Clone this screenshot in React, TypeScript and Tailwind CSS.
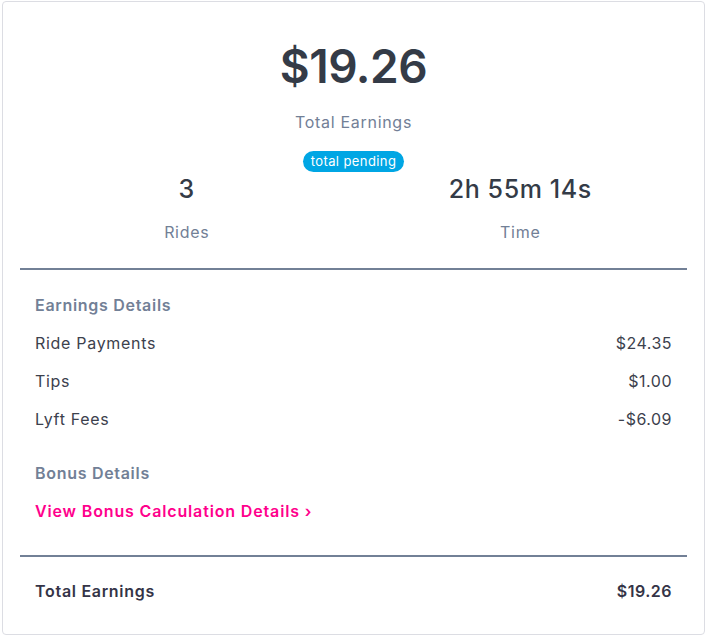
export default function App() {
  const rows = [
    { label: "Ride Payments", value: "$24.35" },
    { label: "Tips", value: "$1.00" },
    { label: "Lyft Fees", value: "-$6.09" },
  ];

  return (
    <div className="w-[710px] h-[636px] bg-white pl-[2px] pt-[1px] font-['Inter',sans-serif]">
      <div className="w-[703px] h-[634px] rounded-[4px] border border-[#dcdde3] px-[17px]">
        {/* Summary */}
        <div className="flex flex-col items-center pt-[26px]">
          <div className="text-[46px] leading-[76px] font-semibold text-[#343b47] tracking-[-0.5px]">$19.26</div>
          <div className="mt-[6px] text-[16px] leading-[24px] tracking-[0.7px] text-[#728096]">Total Earnings</div>
          <div className="mt-[17px] h-[21px] px-[8px] rounded-full bg-[#00a6e4] text-white text-[13px] leading-[21px] tracking-[0.4px]">
            total pending
          </div>
        </div>
        <div className="grid grid-cols-2 pb-[24px]">
          <div className="flex flex-col items-center">
            <div className="text-[25px] leading-[34px] font-medium tracking-[0.6px] text-[#343b47]">3</div>
            <div className="mt-[14px] text-[16px] leading-[24px] tracking-[0.7px] text-[#728096]">Rides</div>
          </div>
          <div className="flex flex-col items-center">
            <div className="text-[25px] leading-[34px] font-medium tracking-[0.6px] text-[#343b47]">2h 55m 14s</div>
            <div className="mt-[14px] text-[16px] leading-[24px] tracking-[0.7px] text-[#728096]">Time</div>
          </div>
        </div>

        <div className="h-[2px] bg-[#728096]" />

        {/* Details */}
        <div className="px-[15px] pt-[23px] pb-[32px] tracking-[0.7px]">
          <div className="text-[16px] leading-[24px] font-semibold text-[#728096]">Earnings Details</div>
          {rows.map((r) => (
            <div key={r.label} className="mt-[14px] flex justify-between text-[16px] leading-[24px] text-[#3c414d]">
              <span>{r.label}</span>
              <span className="tracking-[0.5px]">{r.value}</span>
            </div>
          ))}
          <div className="mt-[30px] text-[16px] leading-[24px] font-semibold text-[#728096]">Bonus Details</div>
          <a href="#" className="mt-[14px] block text-[16px] leading-[24px] font-semibold tracking-[0.85px] text-[#ff008c]">
            View Bonus Calculation Details ›
          </a>
        </div>

        <div className="h-[2px] bg-[#728096]" />

        <div className="px-[15px] pt-[22px] flex justify-between text-[16px] leading-[24px] font-semibold tracking-[0.7px] text-[#343447]">
          <span>Total Earnings</span>
          <span className="tracking-[0.5px]">$19.26</span>
        </div>
      </div>
    </div>
  );
}
